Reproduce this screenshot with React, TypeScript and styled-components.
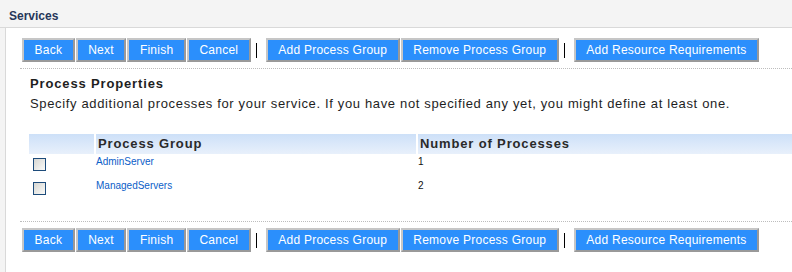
import React from "react";
import styled, { createGlobalStyle } from "styled-components";

const GlobalStyle = createGlobalStyle`
  html, body {
    margin: 0;
    padding: 0;
    background: #f4f4f4;
    font-family: "Liberation Sans", Arial, sans-serif;
  }
`;

const Page = styled.div`
  width: 792px;
  height: 272px;
  overflow: hidden;
  background: #f4f4f4;
`;

const TitleBar = styled.div`
  height: 28px;
  box-sizing: border-box;
  padding: 9px 0 0 9px;
  border-bottom: 1px solid #d9d9d9;
  font-size: 12px;
  font-weight: bold;
  line-height: 14px;
  color: #26375a;
`;

const Panel = styled.div`
  margin-left: 5px;
  height: 244px;
  border-left: 1px solid #d9d9d9;
  background: #fff;
  padding-left: 14px;
`;

const Toolbar = styled.div<{ $top: number; $bottom: number }>`
  display: flex;
  align-items: center;
  gap: 1px;
  padding: ${(p) => p.$top}px 0 ${(p) => p.$bottom}px 2px;
`;

const Button = styled.button`
  height: 24px;
  margin: 0;
  padding: 0 10.5px;
  box-sizing: border-box;
  border: 2px solid;
  border-color: #c6c6c6 #999 #999 #c6c6c6;
  background: #2b8ffc;
  color: #fff;
  font-family: "Liberation Sans", Arial, sans-serif;
  font-size: 12px;
  letter-spacing: 0.25px;
  line-height: 20px;
  white-space: nowrap;
  cursor: pointer;
`;

const Separator = styled.span`
  width: 1px;
  height: 15px;
  margin: 0 8px 0 4px;
  background: #000;
`;

const Divider = styled.div`
  border-top: 1px dotted #bdbdbd;
`;

const Section = styled.div`
  padding-left: 9px;
`;

const SectionTitle = styled.div`
  margin: 7px 0 0 1px;
  font-size: 13px;
  font-weight: bold;
  letter-spacing: 0.85px;
  line-height: 16px;
  color: #1e1e1e;
`;

const Description = styled.div`
  margin: 4px 0 0 1px;
  font-size: 13px;
  letter-spacing: 0.65px;
  line-height: 16px;
  color: #1e1e1e;
  white-space: nowrap;
`;

const Table = styled.div`
  margin-top: 22px;
  margin-right: -1px;
`;

const Row = styled.div<{ $height: number }>`
  display: grid;
  grid-template-columns: 65px 320px 1fr;
  column-gap: 2px;
  height: ${(p) => p.$height}px;
`;

const HeadCell = styled.div`
  padding-left: 2px;
  background: linear-gradient(#cde0f8, #e8f0fb);
  font-size: 13px;
  font-weight: bold;
  letter-spacing: 0.85px;
  line-height: 19px;
  color: #2a2a2a;
  white-space: nowrap;
`;

const Cell = styled.div`
  padding-top: 2px;
  font-size: 10px;
  line-height: 12px;
  color: #111;
`;

const CheckCell = styled.div`
  padding: 4px 0 0 4px;
`;

const Checkbox = styled.span`
  display: block;
  width: 13px;
  height: 13px;
  box-sizing: border-box;
  border: 1px solid #1d4b7a;
  background: linear-gradient(135deg, #d6d6d2 0%, #fafaf8 100%);
`;

const Link = styled.a`
  color: #0b5ec8;
  text-decoration: none;
`;

const Spacer = styled.div`
  height: 19px;
`;

const processes = [
  { name: "AdminServer", count: 1 },
  { name: "ManagedServers", count: 2 },
];

const Actions = ({ top, bottom }: { top: number; bottom: number }) => (
  <Toolbar $top={top} $bottom={bottom}>
    <Button>Back</Button>
    <Button>Next</Button>
    <Button>Finish</Button>
    <Button>Cancel</Button>
    <Separator />
    <Button>Add Process Group</Button>
    <Button>Remove Process Group</Button>
    <Separator />
    <Button>Add Resource Requirements</Button>
  </Toolbar>
);

export default function App() {
  return (
    <Page>
      <GlobalStyle />
      <TitleBar>Services</TitleBar>
      <Panel>
        <Actions top={10} bottom={6} />
        <Divider />
        <Section>
          <SectionTitle>Process Properties</SectionTitle>
          <Description>
            Specify additional processes for your service. If you have not specified any yet, you might define at
            least one.
          </Description>
          <Table>
            <Row $height={20}>
              <HeadCell />
              <HeadCell>Process Group</HeadCell>
              <HeadCell>Number of Processes</HeadCell>
            </Row>
            {processes.map((p) => (
              <Row $height={24} key={p.name}>
                <CheckCell>
                  <Checkbox />
                </CheckCell>
                <Cell>
                  <Link href="#">{p.name}</Link>
                </Cell>
                <Cell>{p.count}</Cell>
              </Row>
            ))}
          </Table>
        </Section>
        <Spacer />
        <Divider />
        <Actions top={6} bottom={0} />
      </Panel>
    </Page>
  );
}
